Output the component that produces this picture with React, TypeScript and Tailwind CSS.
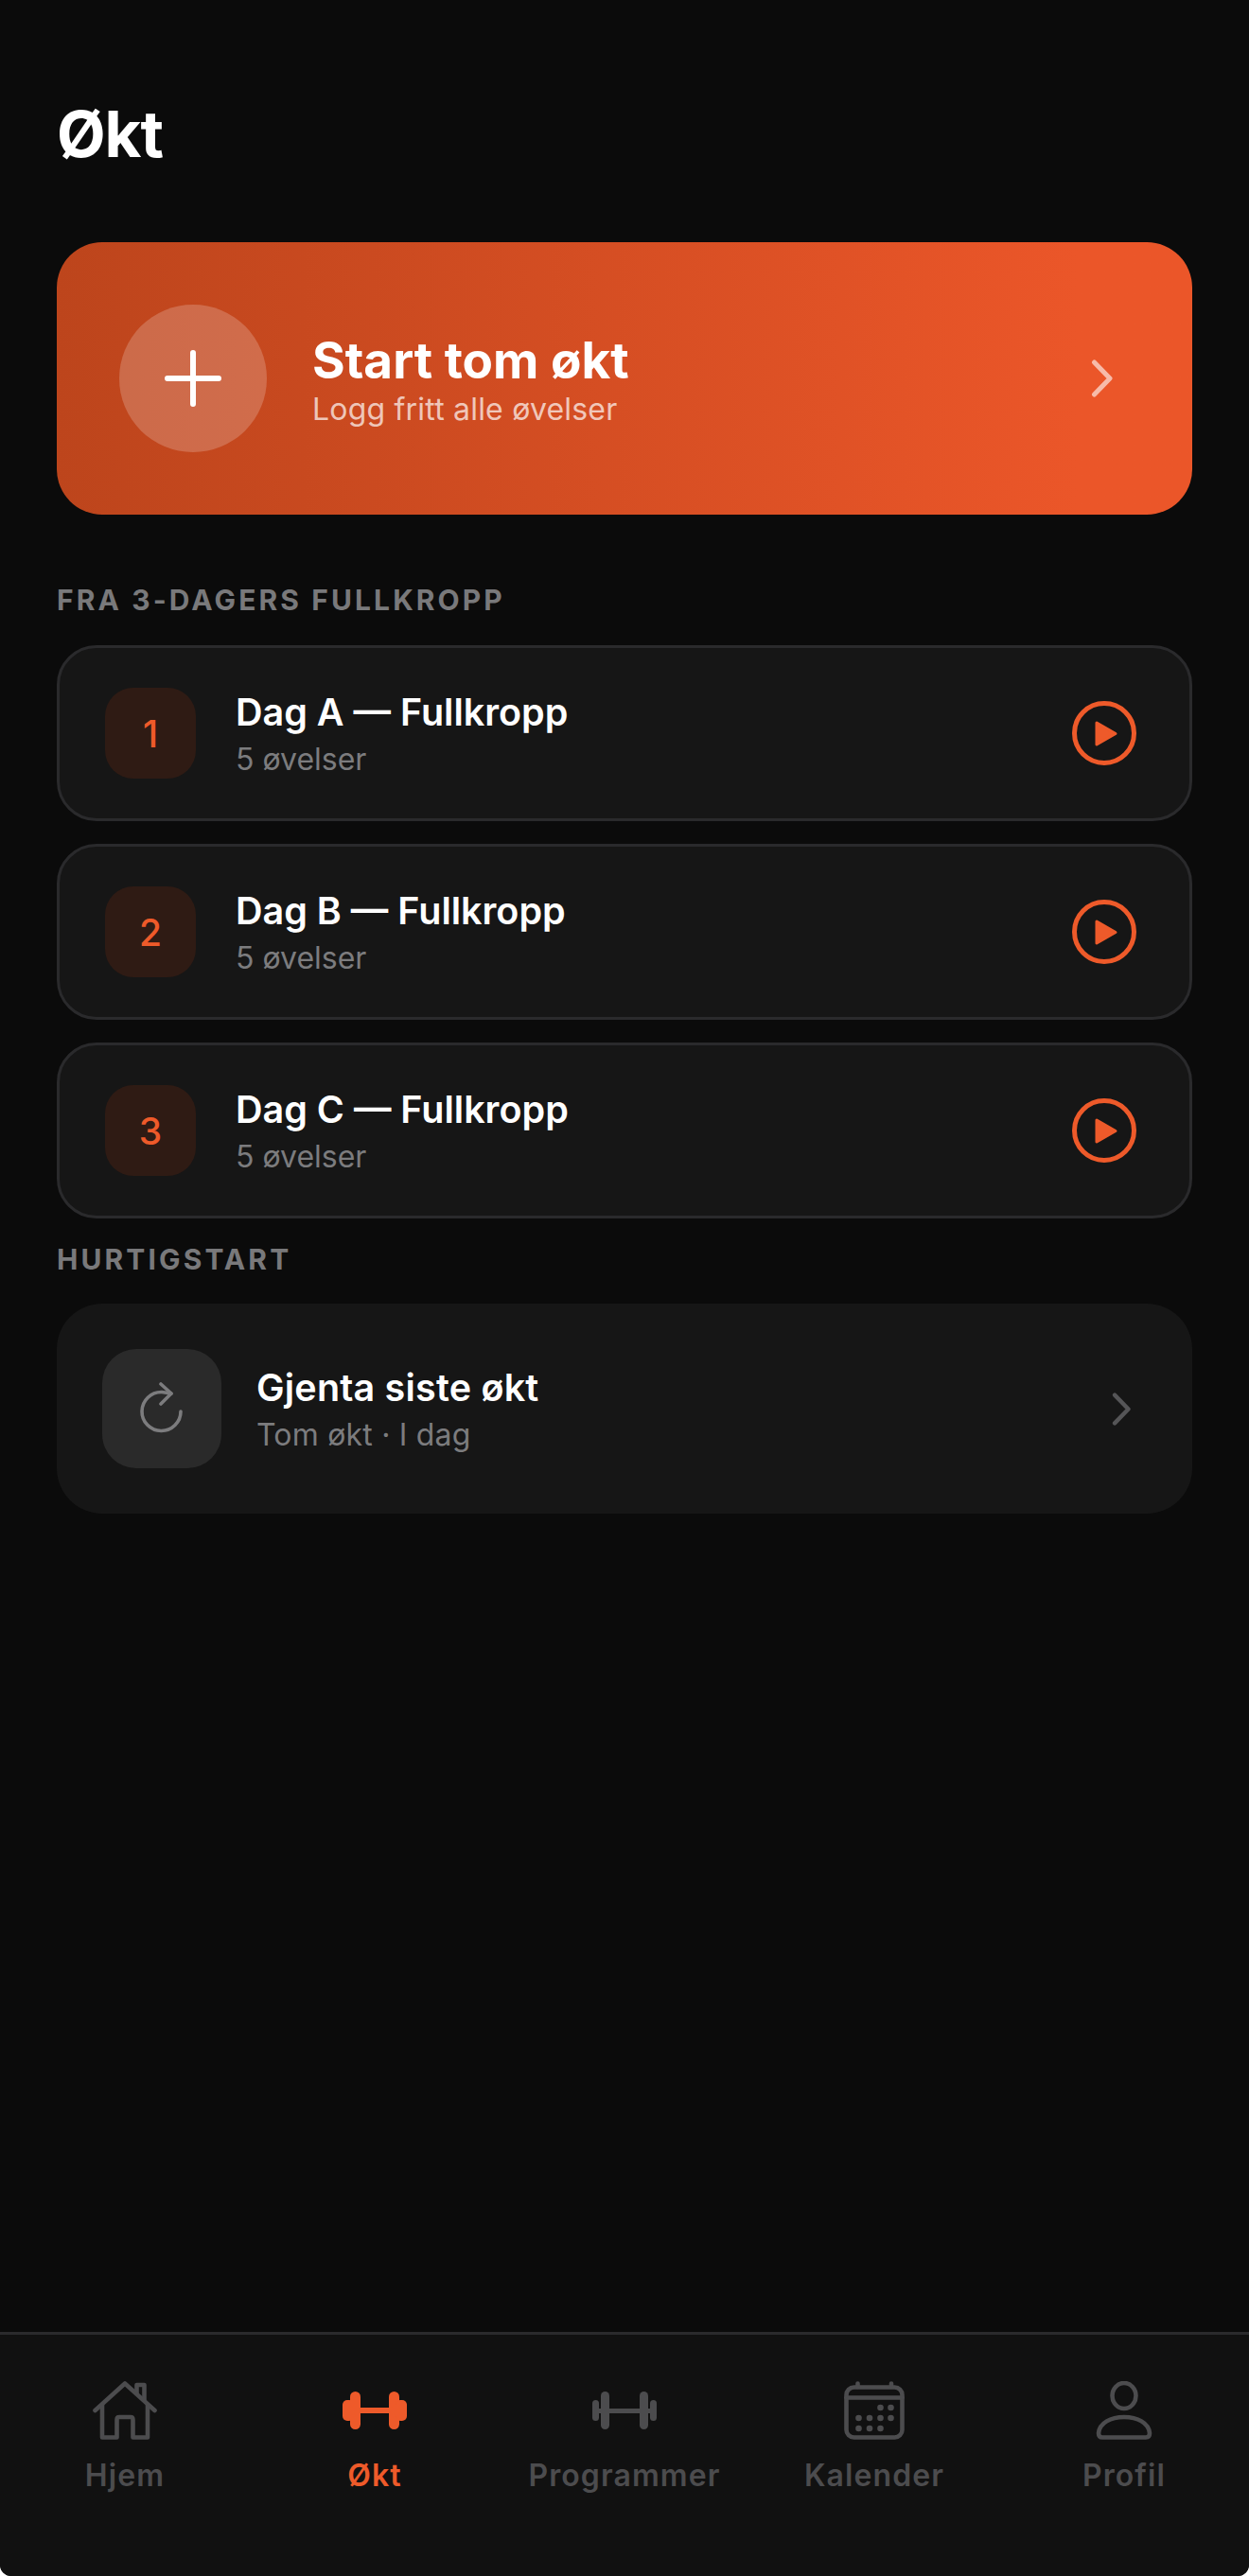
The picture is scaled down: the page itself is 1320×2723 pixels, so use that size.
const accent = "#ee5a2a";

function Chevron({ className }: { className: string }) {
  return (
    <svg viewBox="0 0 24 40" className={className} fill="none" stroke="currentColor" strokeWidth="5" strokeLinecap="round" strokeLinejoin="round">
      <path d="M3.5 3 L20 20 L3.5 37" />
    </svg>
  );
}

function Play() {
  return (
    <svg viewBox="0 0 68 68" className="w-[68px] h-[68px] shrink-0" fill="none">
      <circle cx="34" cy="34" r="31.5" stroke={accent} strokeWidth="5" />
      <path d="M26 23 L46 34.5 L26 46 Z" fill={accent} stroke={accent} strokeWidth="3" strokeLinejoin="round" />
    </svg>
  );
}

function Home() {
  return (
    <svg viewBox="0 0 68 62" className="w-[68px] h-[62px]" fill="none" stroke="currentColor" strokeWidth="4.6" strokeLinecap="round" strokeLinejoin="round">
      <path d="M2.5 31 L34 2.5 L65.5 31" />
      <path d="M10 25 V59.5 H25.5 V41 Q25.5 38 28 38 H40 Q42.5 38 42.5 41 V59.5 H58 V25" />
      <path d="M46.5 13 V4 H54.5 V20" />
    </svg>
  );
}

function DumbbellActive() {
  return (
    <svg viewBox="0 0 68 40" className="w-[68px] h-[40px]" fill="currentColor">
      <rect x="0" y="9" width="12" height="22" rx="5" />
      <rect x="8" y="0" width="11" height="40" rx="5.5" />
      <rect x="18" y="17" width="32" height="6" />
      <rect x="49" y="0" width="11" height="40" rx="5.5" />
      <rect x="56" y="9" width="12" height="22" rx="5" />
    </svg>
  );
}

function DumbbellIdle() {
  return (
    <svg viewBox="0 0 68 40" className="w-[68px] h-[40px]" fill="currentColor">
      <rect x="0" y="9" width="7" height="22" rx="3.5" />
      <rect x="9" y="0" width="9" height="40" rx="4.5" />
      <rect x="7" y="18" width="54" height="5" />
      <rect x="50" y="0" width="9" height="40" rx="4.5" />
      <rect x="61" y="9" width="7" height="22" rx="3.5" />
    </svg>
  );
}

function Calendar() {
  const dots = [
    [38.5, 28], [49.5, 28],
    [15.5, 39], [27, 39], [38.5, 39], [49.5, 39],
    [15.5, 50], [27, 50], [38.5, 50],
  ];
  return (
    <svg viewBox="0 0 64 62" className="w-[64px] h-[62px]" fill="none" stroke="currentColor" strokeWidth="4.6" strokeLinecap="round">
      <rect x="2.5" y="6.5" width="59" height="53" rx="8" />
      <path d="M2.5 17.5 H61.5" />
      <path d="M14.5 2.5 V6 M50 2.5 V6" />
      {dots.map(([x, y]) => (
        <circle key={`${x}-${y}`} cx={x} cy={y} r="3.3" fill="currentColor" stroke="none" />
      ))}
    </svg>
  );
}

function Person() {
  return (
    <svg viewBox="0 0 60 62" className="w-[60px] h-[62px]" fill="none" stroke="currentColor" strokeWidth="4.6" strokeLinejoin="round">
      <ellipse cx="30" cy="15.5" rx="12.5" ry="13.5" />
      <path d="M3 55 C4 44 16 38 30 38 C44 38 56 44 57 55 Q57 59.5 53 59.5 H7 Q3 59.5 3 55 Z" />
    </svg>
  );
}

function Redo() {
  return (
    <svg viewBox="0 0 48 56" className="w-[48px] h-[56px]" fill="none" stroke="#7c7c7e" strokeWidth="3.6" strokeLinecap="round" strokeLinejoin="round">
      <path d="M44 31 A20.5 20.5 0 1 1 24 10.5 L34 12" />
      <path d="M23 2 L34 12 L23 23" />
    </svg>
  );
}

function PlanCard({ n, title }: { n: number; title: string }) {
  return (
    <div className="h-[186px] rounded-[42px] border-[3px] border-[#2a2a2c] bg-[#161616] pl-[48px] pr-[56px] flex items-center">
      <div className="w-[96px] h-[96px] rounded-[30px] bg-[#2f1b14] flex items-center justify-center text-[39px] font-medium text-[#ee5a2a] leading-none">
        {n}
      </div>
      <div className="ml-[42px] pt-[4px] flex-1 flex flex-col">
        <div className="text-[39.5px] leading-[50px] font-semibold text-white">{title}</div>
        <div className="mt-[1px] text-[32px] leading-[48px] text-[#7c7c7e]">5 øvelser</div>
      </div>
      <Play />
    </div>
  );
}

function NavItem({ label, active, children }: { label: string; active?: boolean; children: React.ReactNode }) {
  return (
    <div className={`flex-1 flex flex-col items-center ${active ? "text-[#ee5a2a]" : "text-[#4c4c4e]"}`}>
      <div className="h-[62px] flex items-center justify-center">{children}</div>
      <div className="mt-[18px] text-[32px] leading-[40px] font-semibold tracking-[1.1px]">{label}</div>
    </div>
  );
}

export default function App() {
  return (
    <div className="bg-white h-[2723px] w-[1320px]" style={{ fontFamily: "Inter, 'Noto Sans', sans-serif" }}>
      <div className="h-full rounded-b-[12px] overflow-hidden bg-[#0b0b0b] flex flex-col">
        <div className="flex-1 px-[60px] pt-[102px]">
          <h1 className="text-[67px] leading-[80px] font-bold text-white tracking-[-1px]">Økt</h1>

          <div className="mt-[74px] h-[288px] rounded-[48px] bg-gradient-to-r from-[#bd451c] to-[#eb5629] to-90% pl-[66px] pr-[83px] flex items-center">
            <div className="w-[156px] h-[156px] rounded-full bg-white/20 flex items-center justify-center">
              <svg viewBox="0 0 60 60" className="w-[60px] h-[60px]" fill="none" stroke="white" strokeWidth="6" strokeLinecap="round">
                <path d="M30 3 V57 M3 30 H57" />
              </svg>
            </div>
            <div className="ml-[48px] pt-[2px] flex-1 flex flex-col">
              <div className="text-[53px] leading-[62px] font-bold text-white">Start tom økt</div>
              <div className="mt-[1px] text-[32px] leading-[40px] text-white/70 tracking-[0.2px]">Logg fritt alle øvelser</div>
            </div>
            <Chevron className="w-[24px] h-[40px] text-white/60" />
          </div>

          <div className="mt-[72px] h-[36px] leading-[36px] text-[30px] font-bold tracking-[3.1px] text-[#79797b]">FRA 3-DAGERS FULLKROPP</div>

          <div className="mt-[30px] flex flex-col gap-[24px]">
            <PlanCard n={1} title="Dag A — Fullkropp" />
            <PlanCard n={2} title="Dag B — Fullkropp" />
            <PlanCard n={3} title="Dag C — Fullkropp" />
          </div>

          <div className="mt-[25px] h-[36px] leading-[36px] text-[30px] font-bold tracking-[3.1px] text-[#79797b]">HURTIGSTART</div>

          <div className="mt-[29px] h-[222px] rounded-[48px] bg-[#161616] pl-[48px] pr-[64px] flex items-center">
            <div className="w-[126px] h-[126px] rounded-[36px] bg-[#2a2a2a] flex items-center justify-center">
              <Redo />
            </div>
            <div className="ml-[37px] pt-[4px] flex-1 flex flex-col">
              <div className="text-[39.5px] leading-[50px] font-semibold tracking-[0.2px] text-white">Gjenta siste økt</div>
              <div className="mt-[1px] text-[32px] leading-[48px] tracking-[0.2px] text-[#7c7c7e]">Tom økt · I dag</div>
            </div>
            <Chevron className="w-[21px] h-[35px] text-[#555557]" />
          </div>
        </div>

        <div className="h-[258px] border-t-[3px] border-[#2a2a2c] bg-[#111111] pt-[49px] flex">
          <NavItem label="Hjem"><Home /></NavItem>
          <NavItem label="Økt" active><DumbbellActive /></NavItem>
          <NavItem label="Programmer"><DumbbellIdle /></NavItem>
          <NavItem label="Kalender"><Calendar /></NavItem>
          <NavItem label="Profil"><Person /></NavItem>
        </div>
      </div>
    </div>
  );
}
